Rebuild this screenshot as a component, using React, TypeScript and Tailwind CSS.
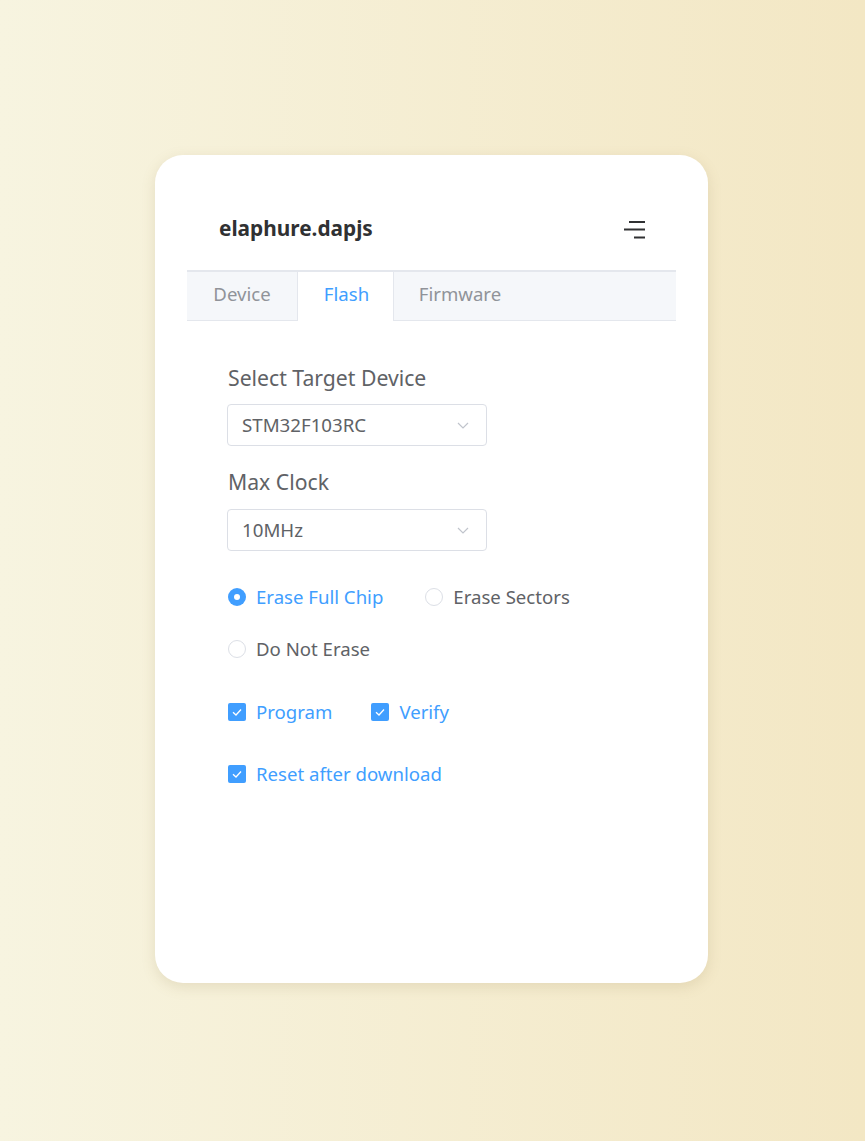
import React from "react";

const font = { fontFamily: '"Noto Sans", "Open Sans", sans-serif' };

function Chevron() {
  return (
    <svg width="14" height="14" viewBox="0 0 14 14" fill="none">
      <path d="M2 5 L7 10 L12 5" stroke="#c0c4cc" strokeWidth="1.2" fill="none" />
    </svg>
  );
}

function Select({ value }: { value: string }) {
  return (
    <div className="-ml-px flex h-[42px] w-[260px] items-center justify-between rounded-[4px] border border-[#dcdfe6] bg-white pl-[14px] pr-[16px]">
      <span className="text-[18.7px] text-[#606266]">{value}</span>
      <Chevron />
    </div>
  );
}

function Radio({ label, checked }: { label: string; checked?: boolean }) {
  return (
    <div className="flex items-center">
      {checked ? (
        <span className="flex h-[18px] w-[18px] items-center justify-center rounded-full bg-[#409eff]">
          <span className="h-[6px] w-[6px] rounded-full bg-white" />
        </span>
      ) : (
        <span className="h-[18px] w-[18px] rounded-full border border-[#dcdfe6] bg-white" />
      )}
      <span className={`ml-[10px] text-[18.6px] ${checked ? "text-[#409eff]" : "text-[#606266]"}`}>{label}</span>
    </div>
  );
}

function Checkbox({ label }: { label: string }) {
  return (
    <div className="flex items-center">
      <span className="flex h-[18px] w-[18px] items-center justify-center rounded-[2px] bg-[#409eff]">
        <svg width="14" height="14" viewBox="0 0 14 14" fill="none">
          <path d="M3 7.2 L6 10 L11 4.5" stroke="white" strokeWidth="1.3" fill="none" />
        </svg>
      </span>
      <span className="ml-[10px] text-[18.6px] text-[#409eff]">{label}</span>
    </div>
  );
}

export default function App() {
  return (
    <div
      className="min-h-[1141px] w-full bg-gradient-to-r from-[#f7f4e0] to-[#f3e7c4] pr-[2px] pt-[155px]"
      style={font}
    >
      <div className="mx-auto h-[828px] w-[553px] rounded-[28px] bg-white px-[32px] pt-[32px] shadow-[0_4px_14px_rgba(150,130,80,0.18)]">
        <div className="flex h-[83px] items-center justify-between px-[32px]">
          <span className="text-[20.8px] font-bold text-[#303133]">elaphure.dapjs</span>
          <svg width="21" height="20" viewBox="0 0 21 20" className="mr-[-1px]">
            <rect x="5" y="2" width="16" height="2" fill="#303133" />
            <rect x="0" y="9.5" width="21" height="2" fill="#303133" />
            <rect x="10" y="17.5" width="11" height="2" fill="#303133" />
          </svg>
        </div>
        <div className="flex h-[51px] border-t-2 border-b border-[#e4e7ed] bg-[#f5f7fa]">
          <div className="flex w-[110px] items-center justify-center pb-[4px] text-[18.6px] text-[#909399]">Device</div>
          <div className="-mb-px flex w-[97px] items-center justify-center border-x border-[#e4e7ed] bg-white pb-[5px] pl-[2px] text-[18.6px] text-[#409eff]">Flash</div>
          <div className="flex w-[132px] items-center justify-center pb-[4px] text-[18.6px] text-[#909399]">Firmware</div>
        </div>
        <div className="pl-[41px] pt-[37px]">
          <div className="flex h-[40px] items-center text-[21.2px] text-[#606266]">Select Target Device</div>
          <div className="mt-[6px]">
            <Select value="STM32F103RC" />
          </div>
          <div className="mt-[16px] flex h-[40px] items-center text-[21.2px] text-[#606266]">Max Clock</div>
          <div className="mt-[7px]">
            <Select value="10MHz" />
          </div>
          <div className="mt-[35px] flex h-[22px] items-center gap-[42px]">
            <Radio label="Erase Full Chip" checked />
            <Radio label="Erase Sectors" />
          </div>
          <div className="mt-[30px] flex h-[22px] items-center">
            <Radio label="Do Not Erase" />
          </div>
          <div className="mt-[41px] flex h-[22px] items-center gap-[39px]">
            <Checkbox label="Program" />
            <Checkbox label="Verify" />
          </div>
          <div className="mt-[40px] flex h-[22px] items-center">
            <Checkbox label="Reset after download" />
          </div>
        </div>
      </div>
    </div>
  );
}
